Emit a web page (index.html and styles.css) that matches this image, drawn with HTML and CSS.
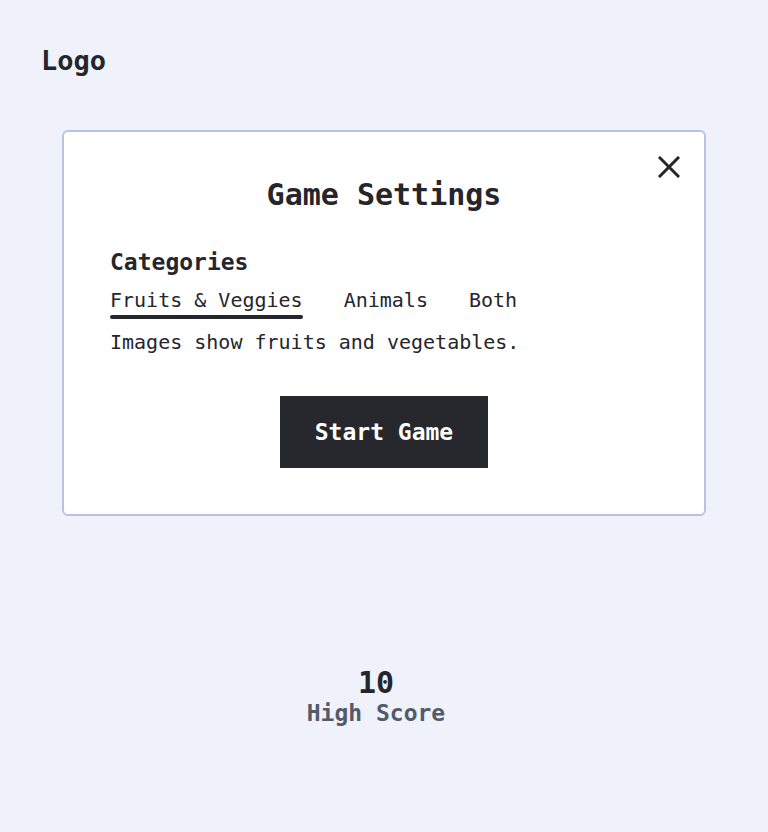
FILE: index.html
```html
<!DOCTYPE html>
<html lang="en">
<head>
<meta charset="utf-8">
<title>Game Settings</title>
<link rel="stylesheet" href="styles.css">
</head>
<body>
<header class="header">
  <div class="logo">Logo</div>
</header>
<main class="main">
  <section class="card">
    <button class="close" aria-label="Close">
      <svg width="22" height="22" viewBox="0 0 22 22"><path d="M2 2 L20 20 M20 2 L2 20" stroke="#25262b" stroke-width="3" stroke-linecap="square" fill="none"/></svg>
    </button>
    <h1 class="title">Game Settings</h1>
    <h2 class="subtitle">Categories</h2>
    <div class="tabs">
      <span class="tab active">Fruits &amp; Veggies</span>
      <span class="tab">Animals</span>
      <span class="tab">Both</span>
    </div>
    <p class="desc">Images show fruits and vegetables.</p>
    <div class="actions">
      <button class="start">Start Game</button>
    </div>
  </section>
  <section class="score">
    <div class="score-value">10</div>
    <div class="score-label">High Score</div>
  </section>
</main>
</body>
</html>
```
FILE: styles.css
```css
* { box-sizing: border-box; }
html, body { margin: 0; padding: 0; }
body {
  background: #eff2fb;
  color: #25262b;
  font-family: "DejaVu Sans Mono", "Liberation Mono", monospace;
  min-height: 832px;
}
.header {
  padding: 43px 40px 0 41px;
  height: 130px;
}
.logo {
  font-weight: bold;
  font-size: 27px;
  line-height: 36px;
}
.main {
  padding: 0 62px;
}
.card {
  position: relative;
  background: #fff;
  border: 2px solid #b9c2e6;
  border-radius: 6px;
  padding: 40px 46px 46px 46px;
}
.close {
  position: absolute;
  top: 24px;
  right: 24px;
  background: none;
  border: 0;
  padding: 0;
  width: 22px;
  height: 22px;
  cursor: pointer;
}
.close svg { display: block; }
.title {
  margin: 0;
  text-align: center;
  font-size: 30px;
  line-height: 45px;
  font-weight: bold;
}
.subtitle {
  margin: 27px 0 0 0;
  font-size: 23px;
  line-height: 36px;
  font-weight: bold;
}
.tabs {
  display: flex;
  gap: 41px;
  margin-top: 5px;
}
.tab {
  position: relative;
  font-size: 20px;
  line-height: 30px;
  padding-bottom: 4px;
}
.tab.active::after {
  content: "";
  position: absolute;
  left: 0;
  right: 0;
  bottom: 0;
  height: 4px;
  border-radius: 2px;
  background: #25262b;
}
.desc {
  margin: 8px 0 0 0;
  font-size: 20px;
  line-height: 30px;
}
.actions {
  display: flex;
  justify-content: center;
  margin-top: 39px;
}
.start {
  background: #27282d;
  color: #fff;
  border: 0;
  font-family: inherit;
  font-weight: bold;
  font-size: 23px;
  line-height: 36px;
  padding: 18px 35px;
  cursor: pointer;
}
.score {
  margin-top: 152px;
  display: flex;
  flex-direction: column;
  align-items: center;
  margin-left: -16px;
}
.score-value {
  font-weight: bold;
  font-size: 30px;
  line-height: 30px;
}
.score-label {
  color: #555a69;
  font-weight: bold;
  font-size: 23px;
  line-height: 30px;
}
```
